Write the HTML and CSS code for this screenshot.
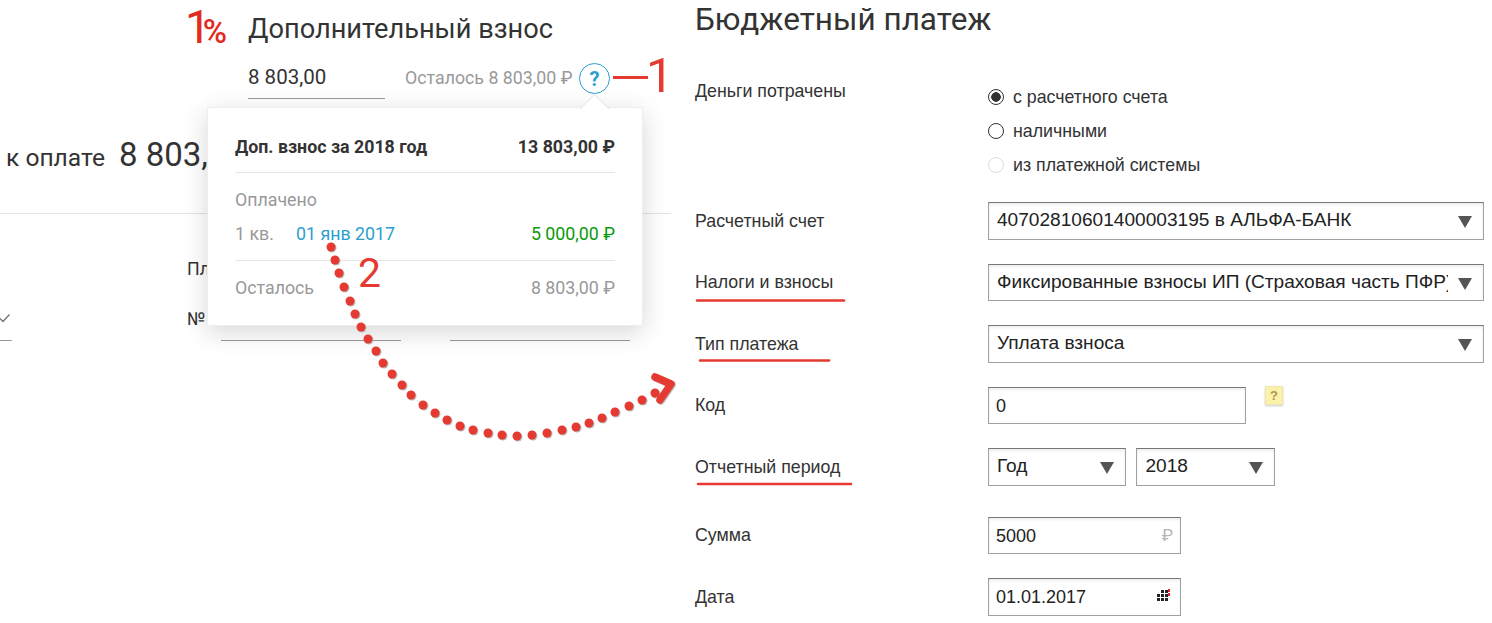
FILE: index.html
```html
<!DOCTYPE html>
<html>
<head>
  <meta charset="utf-8">
  <title>Дополнительный взнос и бюджетный платеж</title>
  <link rel="stylesheet" href="styles.css">
</head>

<body>
  <div class="shot">

    <!-- левая часть: калькулятор взноса -->
    <section class="calc">
      <div class="calc-head">
        <div class="logo"><span class="logo-one">1</span><span class="logo-pct">%</span></div>
        <h2>Дополнительный взнос</h2>
      </div>

      <div class="calc-sum">
        <input class="sum-input" type="text" value="8 803,00">
        <span class="sum-left">Осталось 8 803,00 ₽</span>
        <span class="help-round">?</span>
      </div>

      <div class="total">
        <span class="total-label">к оплате</span>
        <span class="total-value">8 803,</span>
      </div>

      <div class="doc">
        <div class="doc-title">Пл</div>
        <div class="doc-row">
          <svg class="check" width="12" height="12" viewBox="0 0 12 12">
            <path d="M1 6.5 L4 9.5 L10.5 2.5" fill="none" stroke="#777" stroke-width="1.4"/>
          </svg>
          <span class="doc-no">№</span>
        </div>
        <div class="doc-lines">
          <i class="line line-a"></i>
          <i class="line line-b"></i>
          <i class="line line-c"></i>
        </div>
      </div>

      <div class="popup">
        <div class="popup-row popup-top">
          <span>Доп. взнос за 2018 год</span>
          <span>13 803,00 ₽</span>
        </div>
        <div class="popup-paid">
          <div class="popup-caption">Оплачено</div>
          <div class="popup-row">
            <span class="quarter">1 кв.</span>
            <span class="paid-date">01 янв 2017</span>
            <span class="paid-sum">5 000,00 ₽</span>
          </div>
        </div>
        <div class="popup-row popup-rest">
          <span>Осталось</span>
          <span>8 803,00 ₽</span>
        </div>
      </div>
    </section>

    <!-- правая часть: форма платежа -->
    <section class="budget">
      <h1>Бюджетный платеж</h1>

      <div class="row row-radios">
        <label class="row-label">Деньги потрачены</label>
        <div class="radios">
          <label class="radio"><input type="radio" name="paid" checked> с расчетного счета</label>
          <label class="radio"><input type="radio" name="paid"> наличными</label>
          <label class="radio"><input type="radio" name="paid" disabled> из платежной системы</label>
        </div>
      </div>

      <div class="row">
        <label class="row-label">Расчетный счет</label>
        <div class="select select-wide">
          <select><option>40702810601400003195 в АЛЬФА-БАНК</option></select>
        </div>
      </div>

      <div class="row">
        <label class="row-label">Налоги и взносы</label>
        <div class="select select-wide">
          <select><option>Фиксированные взносы ИП (Страховая часть ПФР)</option></select>
        </div>
      </div>

      <div class="row">
        <label class="row-label">Тип платежа</label>
        <div class="select select-wide">
          <select><option>Уплата взноса</option></select>
        </div>
      </div>

      <div class="row">
        <label class="row-label">Код</label>
        <div class="controls">
          <input class="field field-code" type="text" value="0">
          <span class="help-square">?</span>
        </div>
      </div>

      <div class="row">
        <label class="row-label">Отчетный период</label>
        <div class="controls controls-period">
          <div class="select select-period"><select><option>Год</option></select></div>
          <div class="select select-period"><select><option>2018</option></select></div>
        </div>
      </div>

      <div class="row row-sum">
        <label class="row-label">Сумма</label>
        <div class="field-wrap">
          <input class="field" type="text" value="5000">
          <span class="field-rub">₽</span>
        </div>
      </div>

      <div class="row">
        <label class="row-label">Дата</label>
        <div class="field-wrap">
          <input class="field" type="text" value="01.01.2017">
          <svg class="calendar" width="15" height="14" viewBox="0 0 15 14">
            <path fill="#222" d="M6 1h3v3H6zM10 1h3v3h-3zM2 5h3v3H2zM6 5h3v3H6zM10 5h3v3h-3zM2 9h3v3H2zM6 9h3v3H6zM10 9h3v3h-3z"/>
            <path fill="#e8203c" d="M13 0h2v3h-2zM13 4h2v3h-2z"/>
          </svg>
        </div>
      </div>
    </section>

    <!-- пометки поверх снимка -->
    <div class="mark mark-one"><i></i>1</div>
    <div class="mark mark-two">2</div>
    <svg class="marks" width="1492" height="623" viewBox="0 0 1492 623">
      <g fill="#e53a31" class="dots">
        <circle cx="331" cy="247" r="4.5"/><circle cx="335" cy="260" r="4.5"/><circle cx="339" cy="273" r="4.5"/>
        <circle cx="344" cy="287" r="4.5"/><circle cx="350" cy="301" r="4.5"/><circle cx="355" cy="314" r="4.5"/>
        <circle cx="361" cy="327" r="4.5"/><circle cx="368" cy="339" r="4.5"/><circle cx="376" cy="351" r="4.5"/>
        <circle cx="383" cy="363" r="4.5"/><circle cx="392" cy="374" r="4.5"/><circle cx="402" cy="385" r="4.5"/>
        <circle cx="411" cy="395" r="4.5"/><circle cx="423" cy="405" r="4.5"/><circle cx="435" cy="413" r="4.5"/>
        <circle cx="447" cy="420" r="4.5"/><circle cx="460" cy="426" r="4.5"/><circle cx="473" cy="430" r="4.5"/>
        <circle cx="488" cy="433" r="4.5"/><circle cx="502" cy="435" r="4.5"/><circle cx="517" cy="436" r="4.5"/>
        <circle cx="532" cy="435" r="4.5"/><circle cx="547" cy="433" r="4.5"/><circle cx="562" cy="430" r="4.5"/>
        <circle cx="576" cy="427" r="4.5"/><circle cx="589" cy="423" r="4.5"/><circle cx="602" cy="418" r="4.5"/>
        <circle cx="615" cy="412" r="4.5"/><circle cx="629" cy="406" r="4.5"/><circle cx="642" cy="400" r="4.5"/>
        <circle cx="655" cy="393" r="4.5"/>
        <path d="M655 377 L671 384 L660 400" fill="none" stroke="#e53a31" stroke-width="7.5" stroke-linecap="round" stroke-linejoin="round"/>
      </g>
      <g fill="none" stroke="#e53a31" stroke-width="2.5" stroke-linecap="round">
        <path d="M697 300.5 H844"/>
        <path d="M700 360.5 H829"/>
        <path d="M698 484 H851"/>
      </g>
    </svg>
  </div>
</body>

</html>
```

FILE: styles.css
```css
* {
  box-sizing: border-box;
}

body {
  margin: 0;
  background: #fff;
  color: #333;
  font-family: "Liberation Sans", sans-serif;
  font-size: 17.8px;
}

.shot {
  position: relative;
  display: flex;
  width: 1492px;
  height: 623px;
  overflow: hidden;
}

/* левая часть */

.calc {
  position: relative;
  flex: none;
  width: 680px;
  font-family: Roboto, sans-serif;
}

.calc-head {
  display: flex;
  align-items: center;
  height: 58px;
  padding-left: 185px;
}

.logo {
  display: flex;
  align-items: baseline;
  width: 63px;
  margin-top: -4px;
  color: #e02b20;
  line-height: 1;
}

.logo-one {
  font-size: 46px;
  letter-spacing: -8px;
}

.logo-pct {
  font-size: 33px;
  font-weight: 500;
}

.calc-head h2 {
  margin: 0;
  font-size: 27.2px;
  font-weight: 400;
  color: #333;
}

.calc-sum {
  display: flex;
  align-items: center;
  height: 41px;
  margin-left: 248px;
}

.sum-input {
  flex: none;
  width: 137px;
  height: 41px;
  padding: 0 0 3px;
  margin-right: 20px;
  border: 0;
  border-bottom: 1px solid #999;
  font-family: inherit;
  font-size: 20.5px;
  color: #333;
}

.sum-left {
  width: 174px;
  padding-bottom: 2px;
  color: #999;
  white-space: nowrap;
}

.help-round {
  display: flex;
  align-items: center;
  justify-content: center;
  width: 31px;
  height: 31px;
  border: 1.5px solid #2a9fd0;
  border-radius: 50%;
  color: #2a9fd0;
  font-size: 20px;
  font-weight: 700;
}

.total {
  display: flex;
  align-items: baseline;
  width: 671px;
  height: 115px;
  padding: 36px 0 0 6px;
  border-bottom: 1px solid #e2e2e2;
}

.total-label {
  margin-right: 14px;
  font-size: 24.6px;
}

.total-value {
  font-size: 33px;
}

.doc {
  height: 127px;
}

.doc-title {
  padding: 44px 0 0 187px;
}

.doc-row {
  display: flex;
  align-items: center;
  height: 20px;
  margin-top: 29px;
}

.check {
  flex: none;
  margin-left: -1px;
}

.doc-no {
  margin-left: 176px;
}

.doc-lines {
  display: flex;
  margin-top: 12px;
}

.line {
  display: block;
  height: 1px;
  background: #999;
}

.line-a {
  width: 12px;
}

.line-b {
  width: 180px;
  margin-left: 209px;
}

.line-c {
  width: 180px;
  margin-left: 49px;
}

.popup {
  position: absolute;
  top: 107px;
  left: 207px;
  width: 436px;
  height: 219px;
  padding: 0 27px;
  background: #fff;
  border: 1px solid #eee;
  box-shadow: 0 6px 24px rgba(0, 0, 0, 0.16);
}

.popup::before {
  content: "";
  position: absolute;
  top: -10px;
  left: 376px;
  width: 20px;
  height: 20px;
  background: #fff;
  border-top: 1px solid #e4e4e4;
  border-left: 1px solid #e4e4e4;
  transform: rotate(45deg);
}

.popup-row {
  display: flex;
  justify-content: space-between;
  align-items: center;
}

.popup-top {
  height: 65px;
  padding-top: 13px;
  border-bottom: 1px solid #e6e6e6;
  font-weight: 700;
  color: #333;
}

.popup-paid {
  height: 88px;
  padding-top: 16px;
  border-bottom: 1px solid #e6e6e6;
}

.popup-caption {
  margin-bottom: 13px;
  color: #999;
}

.quarter {
  width: 61px;
  color: #999;
}

.paid-date {
  flex: 1;
  color: #2a9fd0;
}

.paid-sum {
  color: #0a9a0a;
}

.popup-rest {
  height: 53px;
  color: #999;
}

/* правая часть */

.budget {
  flex: 1;
  padding-left: 15px;
}

.budget h1 {
  height: 42px;
  margin: 0;
  font-family: Roboto, sans-serif;
  font-size: 31.5px;
  font-weight: 400;
  line-height: 40px;
  color: #333;
}

.row {
  display: grid;
  grid-template-columns: 293px 1fr;
  align-items: center;
  height: 37.5px;
  margin-top: 24px;
  margin-right: 8px;
}

.row-radios {
  align-items: start;
  height: 100px;
  margin-top: 36px;
}

.row-radios .row-label {
  padding-top: 3px;
}

.row-sum {
  margin-top: 31px;
}

.row-label {
  padding-top: 1px;
  color: #333;
}

.radios {
  display: flex;
  flex-direction: column;
  gap: 14px;
  padding-top: 9px;
}

.radio {
  display: flex;
  align-items: center;
  gap: 9px;
  height: 20px;
}

.radio input {
  appearance: none;
  width: 16px;
  height: 16px;
  margin: 0;
  border: 1.5px solid #333;
  border-radius: 50%;
  background: #fff;
}

.radio input:checked {
  background: radial-gradient(circle, #333 0 4.5px, #fff 5px);
}

.radio input:disabled {
  border-color: #ddd;
}

.select {
  position: relative;
}

.select select {
  appearance: none;
  display: block;
  width: 100%;
  height: 37.5px;
  padding: 0 35px 2px 8px;
  border: 1px solid #a0a0a0;
  border-top-color: #777;
  border-radius: 0;
  background: #fff;
  box-shadow: inset 0 2px 3px #eee;
  font-family: inherit;
  font-size: 19.1px;
  color: #222;
}

.select::after {
  content: "";
  position: absolute;
  top: 14px;
  right: 12px;
  border-top: 12px solid #555;
  border-left: 7px solid transparent;
  border-right: 7px solid transparent;
}

.controls {
  display: flex;
  align-items: flex-start;
}

.controls-period {
  gap: 10px;
}

.select-period {
  width: 138.4px;
}

.field {
  display: block;
  width: 193px;
  height: 37.5px;
  padding: 2px 7px 0;
  border: 1px solid #a0a0a0;
  border-top-color: #777;
  box-shadow: inset 0 2px 3px #eee;
  font-family: inherit;
  font-size: 18px;
  color: #222;
}

.field-code {
  width: 258px;
}

.help-square {
  display: flex;
  align-items: center;
  justify-content: center;
  width: 18px;
  height: 19px;
  margin: -1px 0 0 19px;
  background: #fbf1a9;
  border: 1px solid #efe6b4;
  box-shadow: 0 1px 2px #ccc;
  color: #a8975a;
  font-size: 13px;
  font-weight: 700;
}

.field-wrap {
  position: relative;
  width: 193px;
}

.field-rub {
  position: absolute;
  top: 8px;
  right: 8px;
  color: #b5b5b5;
  font-family: Roboto, sans-serif;
  font-size: 17px;
}

.calendar {
  position: absolute;
  top: 11px;
  right: 11px;
}

/* пометки */

.mark {
  position: absolute;
  color: #e53a31;
  font-family: Roboto, sans-serif;
  line-height: 1;
}

.mark-one {
  top: 51px;
  left: 613px;
  display: flex;
  align-items: center;
  font-size: 49px;
}

.mark-one i {
  display: block;
  width: 35px;
  height: 3px;
  margin: 4px -2px 0 0;
  background: #e53a31;
}

.mark-two {
  top: 253px;
  left: 358px;
  font-size: 41px;
}

.marks {
  position: absolute;
  top: 0;
  left: 0;
  pointer-events: none;
}

.dots {
  filter: drop-shadow(1px 1px 0 #bbb);
}
```
